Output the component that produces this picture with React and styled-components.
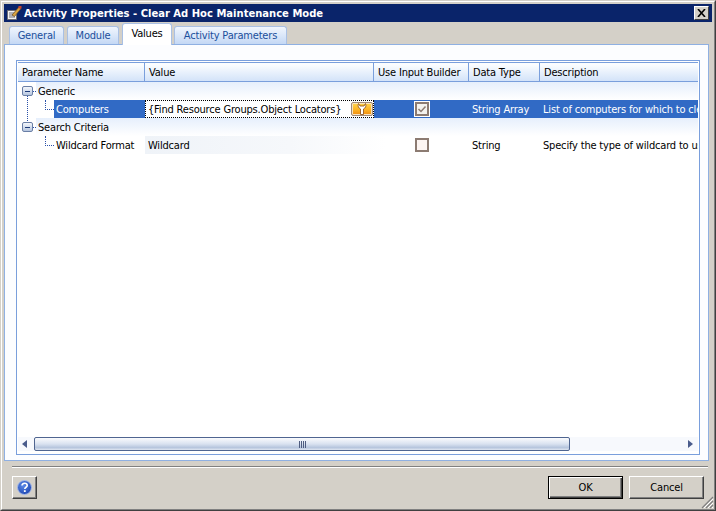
import React from "react";
import styled, { createGlobalStyle, css } from "styled-components";

const GlobalStyle = createGlobalStyle`
  html, body {
    margin: 0;
    padding: 0;
    background: #d4d0c8;
  }
  #root {
    width: 716px;
    height: 511px;
    overflow: hidden;
  }
  * {
    box-sizing: border-box;
  }
`;

const COLUMNS = "127px 229px 95px 71px 1fr";

const WindowFrame = styled.div`
  width: 716px;
  height: 511px;
  background: #d4d0c8;
  border: 1px solid;
  border-color: #d4d0c8 #404040 #404040 #d4d0c8;
  font-family: "DejaVu Sans Condensed", "Liberation Sans", Arial, sans-serif;
  font-size: 11px;
  letter-spacing: -0.18px;
  color: #000;
`;

const WindowInner = styled.div`
  height: 100%;
  border: 1px solid;
  border-color: #fff #808080 #808080 #fff;
  padding: 2px;
  display: flex;
  flex-direction: column;
  position: relative;
`;

const TitleBar = styled.div`
  height: 18px;
  flex: none;
  background: #0a246a;
  display: flex;
  align-items: center;
  padding: 0 3px 0 2px;
  gap: 2px;
`;

const TitleText = styled.div`
  flex: 1;
  color: #fff;
  font-family: "DejaVu Sans", "Liberation Sans", sans-serif;
  font-weight: 700;
  font-size: 10px;
  letter-spacing: 0;
  white-space: nowrap;
`;

const CloseButton = styled.div`
  width: 15px;
  height: 14px;
  background: #d4d0c8;
  border: 1px solid;
  border-color: #fff #404040 #404040 #fff;
  display: flex;
  align-items: center;
  justify-content: center;
`;

const TabStrip = styled.div`
  height: 22px;
  flex: none;
  display: flex;
  align-items: flex-end;
  padding-left: 5px;
  position: relative;
  z-index: 1;
`;

const Tab = styled.div`
  height: 18px;
  margin-right: 3px;
  border: 1px solid #a9c0e4;
  border-bottom: none;
  border-radius: 3px 3px 0 0;
  background: linear-gradient(#f1f6fd, #c4d8f5);
  color: #1b4f9c;
  display: flex;
  align-items: center;
  justify-content: center;
  width: ${(p) => p.$width}px;
  ${(p) =>
    p.$active &&
    css`
      height: 22px;
      margin: 0 2px 0 0;
      background: #fff;
      color: #000;
      padding-bottom: 3px;
      transform: translateY(1px);
    `}
`;

const Panel = styled.div`
  flex: none;
  width: 705px;
  height: 417px;
  border: 1px solid #8fb0e2;
  background: #fcfdff;
  padding: 15px 8px 5px 11px;
  display: flex;
`;

const Grid = styled.div`
  flex: 1;
  min-width: 0;
  border: 1px solid #7a9fdc;
  background: #fff;
  padding: 1px 1px 2px 1px;
  display: flex;
  flex-direction: column;
`;

const HeaderRow = styled.div`
  height: 20px;
  flex: none;
  display: grid;
  grid-template-columns: ${COLUMNS};
  border-top: 1px solid #7a9fdc;
  border-bottom: 1px solid #7a9fdc;
  background: linear-gradient(#fbfdff 10%, #d3e3f9);
`;

const HeaderCell = styled.div`
  border-right: 1px solid #7a9fdc;
  padding-left: 4px;
  display: flex;
  align-items: center;
  white-space: nowrap;
  overflow: hidden;
  &:last-child {
    border-right: none;
  }
`;

const Rows = styled.div`
  flex: 1;
  min-height: 0;
`;

const GroupRow = styled.div`
  height: 18px;
  display: flex;
  align-items: center;
  padding-left: 4px;
  position: relative;
`;

const GroupLabel = styled.div`
  flex: 1;
  align-self: stretch;
  display: flex;
  align-items: center;
  padding-left: 2px;
  background: linear-gradient(#e6effc, #fff);
`;

const Expander = styled.div`
  width: 11px;
  height: 10px;
  flex: none;
  border: 1px solid #6a7fa6;
  border-radius: 2px;
  background: linear-gradient(#f4f7fc, #b6c6df);
  display: flex;
  align-items: center;
  justify-content: center;
  &::before {
    content: "";
    width: 5px;
    height: 1px;
    background: #1c3a78;
  }
`;

const HookH = styled.div`
  width: 3px;
  height: 0;
  flex: none;
  border-top: 1px dotted #2a50a8;
`;

const TreeStem = styled.div`
  position: absolute;
  left: 9px;
  top: 14px;
  height: 27px;
  border-left: 1px dotted #2a50a8;
`;

const DataRow = styled.div`
  height: 18px;
  display: grid;
  grid-template-columns: ${COLUMNS};
  white-space: nowrap;
  color: ${(p) => (p.$selected ? "#fff" : "#000")};
`;

const NameCell = styled.div`
  display: flex;
  align-items: stretch;
  padding-left: 27px;
`;

const Elbow = styled.div`
  width: 9px;
  height: 10px;
  flex: none;
  border-left: 1px dotted #2a50a8;
  border-bottom: 1px dotted #2a50a8;
`;

const NameLabel = styled.div`
  flex: 1;
  display: flex;
  align-items: center;
  padding-left: 2px;
  background: ${(p) => (p.$selected ? "#316ac5" : "transparent")};
`;

const ValueEditor = styled.div`
  border: 1px dotted #000;
  background: #fff;
  color: #000;
  display: flex;
  align-items: center;
  justify-content: space-between;
  padding: 0 0 0 2px;
`;

const ValueCell = styled.div`
  display: flex;
  align-items: center;
  padding-left: 3px;
  margin-right: -12px;
  background: linear-gradient(90deg, #eff3f8, #f6f8fb 60%, #fff);
`;

const BuilderButton = styled.div`
  width: 22px;
  height: 14px;
  flex: none;
  border: 1px solid #a08a78;
  border-radius: 2px;
  background: linear-gradient(#ffd650, #fbb021 60%, #ef8a12);
  box-shadow: inset 0 0 0 1px #f7e3c0;
  display: flex;
  align-items: center;
  justify-content: center;
`;

const PlainCell = styled.div`
  display: flex;
  align-items: center;
  padding-left: 3px;
  background: ${(p) => (p.$selected ? "#316ac5" : "transparent")};
  overflow: hidden;
`;

const CheckCell = styled(PlainCell)`
  justify-content: center;
  padding-left: 0;
`;

const CheckBox = styled.div`
  width: 14px;
  height: 14px;
  border: 2px solid #8c7b72;
  background: ${(p) => (p.$checked ? "#f4f2ee" : "#fdf5f2")};
  outline: ${(p) => (p.$checked ? "1px solid #fff" : "none")};
  display: flex;
  align-items: center;
  justify-content: center;
`;

const ScrollBar = styled.div`
  height: 14px;
  flex: none;
  margin-bottom: 1px;
  display: flex;
  align-items: center;
  background: #f7f9fd;
  padding: 0 5px 0 4px;
`;

const ScrollArrow = styled.div`
  width: 0;
  height: 0;
  flex: none;
  border-top: 4px solid transparent;
  border-bottom: 4px solid transparent;
  ${(p) =>
    p.$dir === "left"
      ? "border-right: 5px solid #4a5c8c;"
      : "border-left: 5px solid #4a5c8c;"}
`;

const ScrollThumb = styled.div`
  width: 536px;
  height: 14px;
  margin-left: 7px;
  border: 1px solid #4f6590;
  border-radius: 2px;
  background: linear-gradient(#fafbfd, #d9e2f0 50%, #b6c5dd 80%, #dfe6f1);
  display: flex;
  align-items: center;
  justify-content: center;
`;

const ScrollSpacer = styled.div`
  flex: 1;
`;

const Grip = styled.div`
  width: 7px;
  height: 7px;
  background: repeating-linear-gradient(90deg, #4f5d80 0 1px, transparent 1px 2px);
`;

const Separator = styled.div`
  height: 2px;
  flex: none;
  margin: 5px 4px 0 8px;
  border-top: 1px solid #808080;
  border-bottom: 1px solid #fff;
`;

const Footer = styled.div`
  flex: 1;
  display: flex;
  align-items: flex-start;
  padding: 8px 8px 0 8px;
`;

const Button = styled.div`
  width: 75px;
  height: 23px;
  margin-left: ${(p) => (p.$first ? "auto" : "6px")};
  display: flex;
  align-items: center;
  justify-content: center;
  background: #d4d0c8;
  border: 1px solid;
  border-color: #fff #404040 #404040 #fff;
  box-shadow: inset -1px -1px 0 #808080;
  ${(p) =>
    p.$default &&
    css`
      border-color: #000;
      box-shadow: inset 1px 1px 0 #fff, inset -1px -1px 0 #404040, inset -2px -2px 0 #808080;
    `}
`;

const HelpButton = styled(Button)`
  width: 25px;
  margin-left: 0;
`;

const ResizeGrip = styled.svg`
  position: absolute;
  right: 0;
  bottom: 0;
`;

function TitleIcon() {
  return (
    <svg width="16" height="16" viewBox="0 0 16 16">
      <path d="M1.5 5.5h9v9h-9z" fill="#f2f2f4" stroke="#6d6d74" />
      <path d="M3 8h6M3 10h6M3 12h6" stroke="#6d6d74" />
      <path d="M6 10l7-8 2 1.5-6.5 8z" fill="#d9a441" stroke="#6a4a1e" strokeWidth="0.7" />
      <path d="M12.5 1h3v2.5h-3z" fill="#c8412a" />
    </svg>
  );
}

function WrenchIcon() {
  return (
    <svg width="12" height="12" viewBox="0 0 12 12" style={{ flex: "none" }}>
      <path
        d="M2.5 0.5C1.4 3 2.6 5.2 4.5 6V11.5h3V6C9.4 5.2 10.6 3 9.5 0.5L8 3H4z"
        fill="#fff"
        stroke="#8a4a10"
        strokeWidth="0.8"
      />
    </svg>
  );
}

function HelpIcon() {
  return (
    <svg width="15" height="15" viewBox="0 0 15 15">
      <defs>
        <radialGradient id="helpBlue" cx="0.4" cy="0.35" r="0.7">
          <stop offset="0" stopColor="#5c8ae8" />
          <stop offset="1" stopColor="#1c44b0" />
        </radialGradient>
      </defs>
      <circle cx="7.5" cy="7.5" r="7" fill="url(#helpBlue)" stroke="#a8bbe8" />
      <path
        d="M5 5.6C5 4 6.3 3.3 7.6 3.3 9.2 3.3 10.2 4.2 10.2 5.4 10.2 7.2 7.8 7.3 7.8 9"
        fill="none"
        stroke="#fff"
        strokeWidth="1.6"
      />
      <rect x="6.9" y="10.2" width="1.8" height="1.8" fill="#fff" />
    </svg>
  );
}

function App() {
  return (
    <>
      <GlobalStyle />
      <WindowFrame>
        <WindowInner>
          <TitleBar>
            <TitleIcon />
            <TitleText>Activity Properties - Clear Ad Hoc Maintenance Mode</TitleText>
            <CloseButton>
              <svg width="9" height="8" viewBox="0 0 9 8">
                <path d="M1 0l7 8M8 0L1 8" stroke="#000" strokeWidth="1.6" fill="none" />
              </svg>
            </CloseButton>
          </TitleBar>

          <TabStrip>
            <Tab $width={55}>General</Tab>
            <Tab $width={52}>Module</Tab>
            <Tab $width={50} $active>
              Values
            </Tab>
            <Tab $width={113}>Activity Parameters</Tab>
          </TabStrip>

          <Panel>
            <Grid>
              <HeaderRow>
                <HeaderCell>Parameter Name</HeaderCell>
                <HeaderCell>Value</HeaderCell>
                <HeaderCell>Use Input Builder</HeaderCell>
                <HeaderCell>Data Type</HeaderCell>
                <HeaderCell>Description</HeaderCell>
              </HeaderRow>

              <Rows>
                <GroupRow>
                  <TreeStem />
                  <Expander />
                  <HookH />
                  <GroupLabel>Generic</GroupLabel>
                </GroupRow>
                <DataRow $selected>
                  <NameCell>
                    <Elbow />
                    <NameLabel $selected>Computers</NameLabel>
                  </NameCell>
                  <ValueEditor>
                    {"{Find Resource Groups.Object Locators}"}
                    <BuilderButton>
                      <WrenchIcon />
                    </BuilderButton>
                  </ValueEditor>
                  <CheckCell $selected>
                    <CheckBox $checked>
                      <svg width="10" height="10" viewBox="0 0 10 10">
                        <path d="M1.5 5l2.5 2.5L8.5 2.5" fill="none" stroke="#8c7b72" strokeWidth="1.5" />
                      </svg>
                    </CheckBox>
                  </CheckCell>
                  <PlainCell $selected>String Array</PlainCell>
                  <PlainCell $selected>List of computers for which to clear</PlainCell>
                </DataRow>
                <GroupRow>
                  <Expander />
                  <HookH />
                  <GroupLabel>Search Criteria</GroupLabel>
                </GroupRow>
                <DataRow>
                  <NameCell>
                    <Elbow />
                    <NameLabel>Wildcard Format</NameLabel>
                  </NameCell>
                  <ValueCell>Wildcard</ValueCell>
                  <CheckCell>
                    <CheckBox />
                  </CheckCell>
                  <PlainCell>String</PlainCell>
                  <PlainCell>Specify the type of wildcard to use</PlainCell>
                </DataRow>
              </Rows>

              <ScrollBar>
                <ScrollArrow $dir="left" />
                <ScrollThumb>
                  <Grip />
                </ScrollThumb>
                <ScrollSpacer />
                <ScrollArrow $dir="right" />
              </ScrollBar>
            </Grid>
          </Panel>

          <Separator />

          <Footer>
            <HelpButton>
              <HelpIcon />
            </HelpButton>
            <Button $first $default>
              OK
            </Button>
            <Button>Cancel</Button>
          </Footer>

          <ResizeGrip width="13" height="13" viewBox="0 0 13 13">
            <path d="M1 12L12 1M5 12l7-7M9 12l3-3" stroke="#808080" strokeWidth="1.2" />
            <path d="M3 12L12 3M7 12l5-5M11 12l1-1" stroke="#fff" strokeWidth="1" />
          </ResizeGrip>
        </WindowInner>
      </WindowFrame>
    </>
  );
}

export default App;
